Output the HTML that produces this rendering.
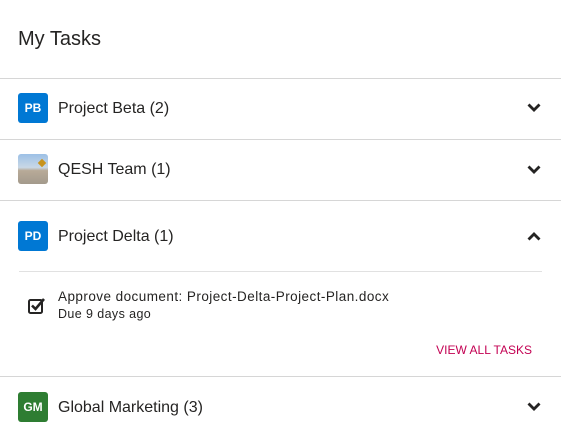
<!DOCTYPE html>
<html><head><style>
body{margin:0;width:561px;height:435px;background:#fff;font-family:"Liberation Sans",sans-serif;color:#252423;position:relative;overflow:hidden}
.a{position:absolute}
.hr{position:absolute;left:0;width:561px;height:1px;background:#d6d6d6}
.av{position:absolute;left:18px;width:30px;height:30px;border-radius:3px;color:#fff;font-size:12px;font-weight:bold;display:flex;align-items:center;justify-content:center}
.t{position:absolute;left:58px;font-size:16px;line-height:20px}
.ch{position:absolute;left:527px}
</style></head><body>
<div class="a" style="left:18px;top:27px;font-size:20px;line-height:24px">My Tasks</div>
<div class="hr" style="top:78px"></div>
<div class="av" style="top:93px;background:#0078d4">PB</div>
<div class="t" style="top:99px">Project Beta (2)</div>
<svg class="ch" style="top:103px" width="14" height="10" viewBox="0 0 14 10"><path d="M0.5 2.5L2.5 0.5 7 5 11.5 0.5 13.5 2.5 7 9z" fill="#252423"/></svg>
<div class="hr" style="top:139px"></div>
<div class="av" style="top:154px;background:linear-gradient(#9cc0e6 0%,#c9d8e6 45%,#b8aa98 55%,#a39a8c 100%)"><div style="position:absolute;left:21px;top:6px;width:6px;height:6px;background:#c8931c;transform:rotate(45deg)"></div></div>
<div class="t" style="top:160px">QESH Team (1)</div>
<svg class="ch" style="top:165px" width="14" height="10" viewBox="0 0 14 10"><path d="M0.5 2.5L2.5 0.5 7 5 11.5 0.5 13.5 2.5 7 9z" fill="#252423"/></svg>
<div class="hr" style="top:200px"></div>
<div class="av" style="top:221px;background:#0078d4">PD</div>
<div class="t" style="top:227px">Project Delta (1)</div>
<svg class="ch" style="top:231px" width="14" height="10" viewBox="0 0 14 10"><path d="M0.5 7.5L2.5 9.5 7 5 11.5 9.5 13.5 7.5 7 1z" fill="#252423"/></svg>
<div class="a" style="left:19px;top:271px;width:523px;height:1px;background:#e1e1e1"></div>
<svg class="a" style="left:27px;top:296px" width="20" height="20" viewBox="0 0 20 20"><rect x="2" y="4" width="13" height="13" rx="1.5" stroke="#252423" stroke-width="2" fill="none"/><path d="M5 9.5l3.5 3.5L17 3" stroke="#252423" stroke-width="2.6" fill="none"/></svg>
<div class="a" style="left:58px;top:289px;font-size:13.5px;line-height:16px;letter-spacing:0.45px">Approve document: Project-Delta-Project-Plan.docx</div>
<div class="a" style="left:58px;top:307px;font-size:12.5px;line-height:15px;letter-spacing:0.4px">Due 9 days ago</div>
<div class="a" style="right:29px;top:343px;font-size:12px;line-height:15px;color:#c30052">VIEW ALL TASKS</div>
<div class="hr" style="top:376px"></div>
<div class="av" style="top:392px;background:#2e7d32">GM</div>
<div class="t" style="top:398px">Global Marketing (3)</div>
<svg class="ch" style="top:402px" width="14" height="10" viewBox="0 0 14 10"><path d="M0.5 2.5L2.5 0.5 7 5 11.5 0.5 13.5 2.5 7 9z" fill="#252423"/></svg>
</body></html>
